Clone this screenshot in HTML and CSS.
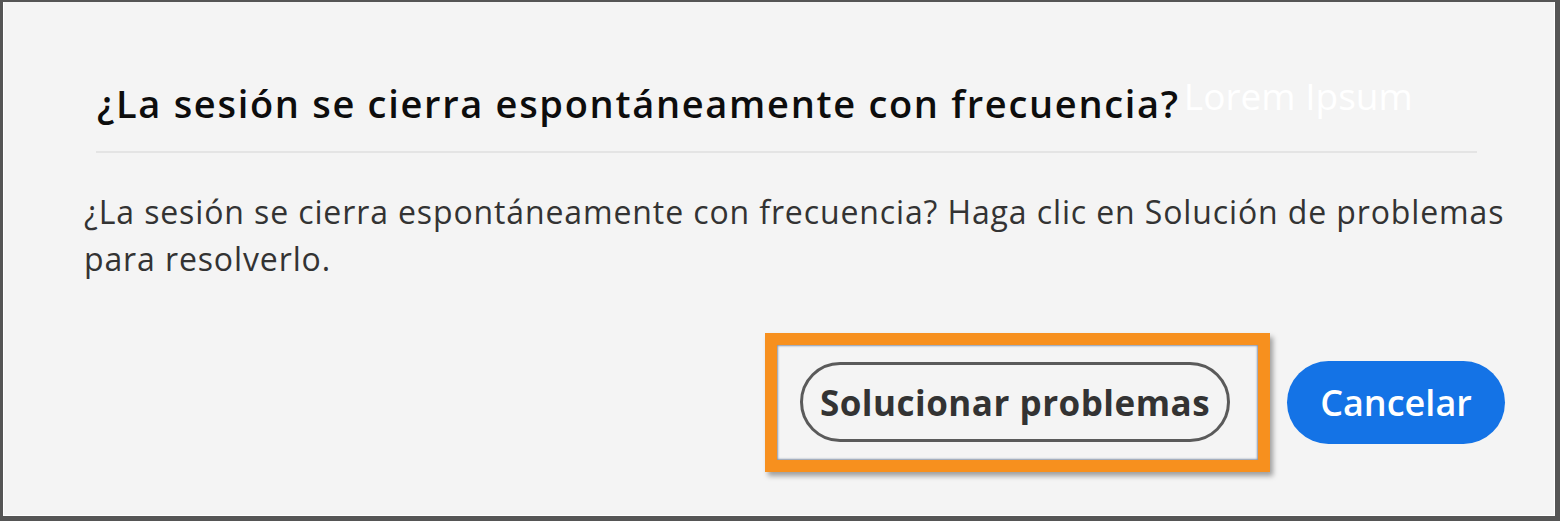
FILE: index.html
```html
<!DOCTYPE html>
<html lang="es">
<head>
<meta charset="utf-8">
<title>Solucionar problemas</title>
<link rel="stylesheet" href="styles.css">
</head>
<body>
<div class="frame">
  <div class="dialog">
    <div class="head"><span class="title">¿La sesión se cierra espontáneamente con frecuencia?</span><span class="ghost">Lorem Ipsum</span></div>
    <div class="divider"></div>
    <p class="body-text">¿La sesión se cierra espontáneamente con frecuencia? Haga clic en Solución de problemas para resolverlo.</p>
    <div class="actions">
      <div class="highlight">
        <button class="btn btn-outline">Solucionar problemas</button>
      </div>
      <button class="btn btn-primary">Cancelar</button>
    </div>
  </div>
</div>
</body>
</html>
```
FILE: styles.css
```css
* { box-sizing: border-box; }
html, body { margin: 0; padding: 0; background: #f4f4f4; }
.frame {
  width: 1560px;
  height: 521px;
  border-style: solid;
  border-color: #555555;
  border-width: 2px 5px 5px 3px;
  background: #f4f4f4;
  box-shadow: inset 1px 0 0 #ffffff, inset -1px -1px 0 #ffffff;
  overflow: hidden;
}
.dialog {
  padding: 72px 50px 0 81px;
  font-family: "Open Sans", "Liberation Sans", sans-serif;
}
.head {
  margin-left: 13px;
  font-size: 38px;
  line-height: 44px;
  white-space: nowrap;
}
.title {
  font-weight: 600;
  color: #0d0d0d;
  letter-spacing: 1.7px;
}
.ghost {
  font-weight: 400;
  color: #ffffff;
  margin-left: 4px;
  vertical-align: 8px;
  font-size: 37px;
}
.divider {
  margin: 26px 0 0 12px;
  width: 1381px;
  height: 2px;
  background: #e4e4e4;
}
.body-text {
  margin: 35px 0 0 0;
  font-size: 32px;
  line-height: 47px;
  color: #333333;
  letter-spacing: 0.88px;
  width: 1440px;
}
.actions {
  margin-top: 51px;
  display: flex;
  justify-content: flex-end;
  align-items: center;
  gap: 17px;
}
.highlight {
  border: 12px solid #f7901e;
  padding: 17px 28px 18px 23px;
  box-shadow: 3px 4px 5px rgba(0,0,0,0.35), inset 0 0 2px 1px rgba(90,110,140,0.7);
}
.btn {
  font-family: "Open Sans", "Liberation Sans", sans-serif;
  border-radius: 42px;
  cursor: pointer;
}
.btn-outline {
  display: block;
  width: 430px;
  height: 80px;
  border: 3px solid #5a5a5a;
  background: #f4f4f4;
  color: #333333;
  font-size: 35px;
  font-weight: 700;
  letter-spacing: 0.5px;
}
.btn-primary {
  width: 218px;
  height: 83px;
  border: none;
  background: #1473e6;
  color: #ffffff;
  font-size: 36px;
  font-weight: 600;
}
```
